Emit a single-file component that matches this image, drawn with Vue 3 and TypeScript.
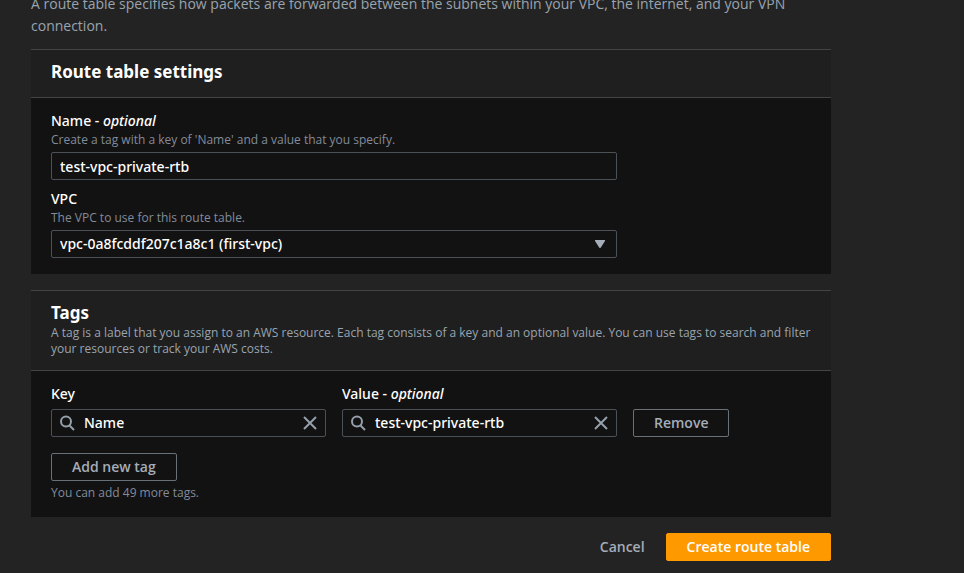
<script setup lang="ts">
import { reactive, ref } from 'vue'

interface Tag {
  id: number
  key: string
  value: string
}

const TAG_LIMIT = 50

const name = ref('test-vpc-private-rtb')
const vpc = ref('vpc-0a8fcddf207c1a8c1')
const vpcs = [{ id: 'vpc-0a8fcddf207c1a8c1', label: 'first-vpc' }]

let nextId = 2
const tags = reactive<Tag[]>([{ id: 1, key: 'Name', value: 'test-vpc-private-rtb' }])

function addTag(): void {
  if (tags.length < TAG_LIMIT) tags.push({ id: nextId++, key: '', value: '' })
}

function removeTag(index: number): void {
  tags.splice(index, 1)
}
</script>

<template>
  <main class="page">
    <form class="form" @submit.prevent>
      <p class="intro">
        A route table specifies how packets are forwarded between the subnets within your VPC, the
        internet, and your VPN connection.
      </p>

      <section class="card">
        <header class="card-header">
          <h2>Route table settings</h2>
        </header>
        <div class="card-body">
          <div class="field">
            <label for="rt-name">Name - <i>optional</i></label>
            <p class="hint">Create a tag with a key of 'Name' and a value that you specify.</p>
            <input id="rt-name" v-model="name" class="control" type="text" />
          </div>
          <div class="field">
            <label for="rt-vpc">VPC</label>
            <p class="hint">The VPC to use for this route table.</p>
            <div class="select-wrap">
              <select id="rt-vpc" v-model="vpc" class="control">
                <option v-for="v in vpcs" :key="v.id" :value="v.id">{{ v.id }} ({{ v.label }})</option>
              </select>
              <svg class="caret" viewBox="0 0 10 8" aria-hidden="true"><path d="M0 0h10v1L5.5 8h-1L0 1z" /></svg>
            </div>
          </div>
        </div>
      </section>

      <section class="card">
        <header class="card-header">
          <h2>Tags</h2>
          <p class="card-text">
            A tag is a label that you assign to an AWS resource. Each tag consists of a key and an
            optional value. You can use tags to search and filter your resources or track your AWS costs.
          </p>
        </header>
        <div class="card-body">
          <div v-for="(tag, i) in tags" :key="tag.id" class="tag-row">
            <div class="tag-fields">
              <div class="tag-field">
                <label :for="`key-${tag.id}`">Key</label>
                <div class="control search">
                  <svg class="icon" viewBox="0 0 16 16" aria-hidden="true">
                    <circle cx="6" cy="6.5" r="5" /><path d="M9.5 10.5L14 15" />
                  </svg>
                  <input :id="`key-${tag.id}`" v-model="tag.key" type="text" />
                  <button class="clear" type="button" aria-label="Clear key" @click="tag.key = ''">
                    <svg class="icon" viewBox="0 0 16 16"><path d="M2 2l12 12M14 2L2 14" /></svg>
                  </button>
                </div>
              </div>
              <div class="tag-field">
                <label :for="`value-${tag.id}`">Value - <i>optional</i></label>
                <div class="control search">
                  <svg class="icon" viewBox="0 0 16 16" aria-hidden="true">
                    <circle cx="6" cy="6.5" r="5" /><path d="M9.5 10.5L14 15" />
                  </svg>
                  <input :id="`value-${tag.id}`" v-model="tag.value" type="text" />
                  <button class="clear" type="button" aria-label="Clear value" @click="tag.value = ''">
                    <svg class="icon" viewBox="0 0 16 16"><path d="M2 2l12 12M14 2L2 14" /></svg>
                  </button>
                </div>
              </div>
            </div>
            <button class="btn" type="button" @click="removeTag(i)">Remove</button>
          </div>
          <button class="btn add" type="button" @click="addTag">Add new tag</button>
          <p class="hint below">You can add {{ TAG_LIMIT - tags.length }} more tags.</p>
        </div>
      </section>

      <footer class="actions">
        <button class="btn link" type="button">Cancel</button>
        <button class="btn primary" type="submit">Create route table</button>
      </footer>
    </form>
  </main>
</template>

<style>
html,
body {
  background: #232323;
}
</style>

<style scoped>
.page {
  margin-top: -7px;
  padding: 0 31px 12px;
  color: #fff;
  font-family: 'Open Sans', 'Noto Sans', sans-serif;
  font-size: 14px;
  line-height: 22px;
}
.form {
  max-width: 800px;
}
.intro,
.hint,
.card-text,
h2 {
  margin: 0;
}
.intro {
  margin-bottom: 12px;
  color: #9aa4af;
}
.card {
  margin-bottom: 16px;
  border-top: 1px solid #444;
  background: #121212;
}
.card-header {
  padding: 10px 20px 13px;
  border-bottom: 1px solid #444;
  background: #1f1f1f;
}
h2 {
  font-family: 'Noto Sans', sans-serif;
  font-size: 17px;
  font-weight: 700;
  line-height: 24px;
}
.card-text {
  color: #9aa4af;
  font-size: 12px;
  line-height: 16px;
}
.card-body {
  padding: 12px 20px 16px;
}
.field {
  max-width: 566px;
}
.field + .field {
  margin-top: 8px;
}
label {
  display: block;
  font-family: 'Noto Sans', sans-serif;
  font-weight: 500;
}
.hint {
  color: #828b9b;
  font-size: 12px;
  line-height: 16px;
}
.control {
  display: block;
  box-sizing: border-box;
  width: 100%;
  height: 28px;
  margin: 4px 0 0;
  padding: 0 8px;
  border: 1px solid #4c5057;
  border-radius: 2px;
  background: #121212;
  color: #fff;
  font: 500 14px/22px 'Noto Sans', sans-serif;
}
.control:focus,
.search:focus-within {
  outline: 1px solid #00a1c9;
}
.select-wrap {
  position: relative;
}
select.control {
  appearance: none;
}
.caret {
  position: absolute;
  top: 10px;
  right: 12px;
  width: 10px;
  height: 8px;
  fill: #a5adb8;
  pointer-events: none;
}
.tag-row {
  display: flex;
  align-items: flex-end;
  gap: 16px;
  margin-bottom: 16px;
}
.tag-fields {
  display: grid;
  flex: 0 1 566px;
  grid-template-columns: 1fr 1fr;
  gap: 16px;
}
.search {
  display: flex;
  align-items: center;
  gap: 8px;
  padding-right: 7px;
}
.search input {
  flex: 1;
  min-width: 0;
  padding: 0;
  border: 0;
  outline: 0;
  background: transparent;
  color: #fff;
  font: inherit;
}
.icon {
  display: block;
  flex: none;
  width: 16px;
  height: 16px;
  fill: none;
  stroke: #95a0ab;
  stroke-width: 2;
}
.clear {
  padding: 0;
  border: 0;
  background: none;
  cursor: pointer;
}
.btn {
  box-sizing: border-box;
  height: 28px;
  padding: 0 20px;
  border: 1px solid #687078;
  border-radius: 2px;
  background: transparent;
  color: #a5adb8;
  font: inherit;
  font-weight: 600;
  white-space: nowrap;
  cursor: pointer;
}
.add {
  display: block;
}
.below {
  margin-top: 4px;
}
.actions {
  display: flex;
  justify-content: flex-end;
}
.link {
  border-color: transparent;
}
.primary {
  border-color: #f90;
  background: #f90;
  color: #fff;
}
</style>
